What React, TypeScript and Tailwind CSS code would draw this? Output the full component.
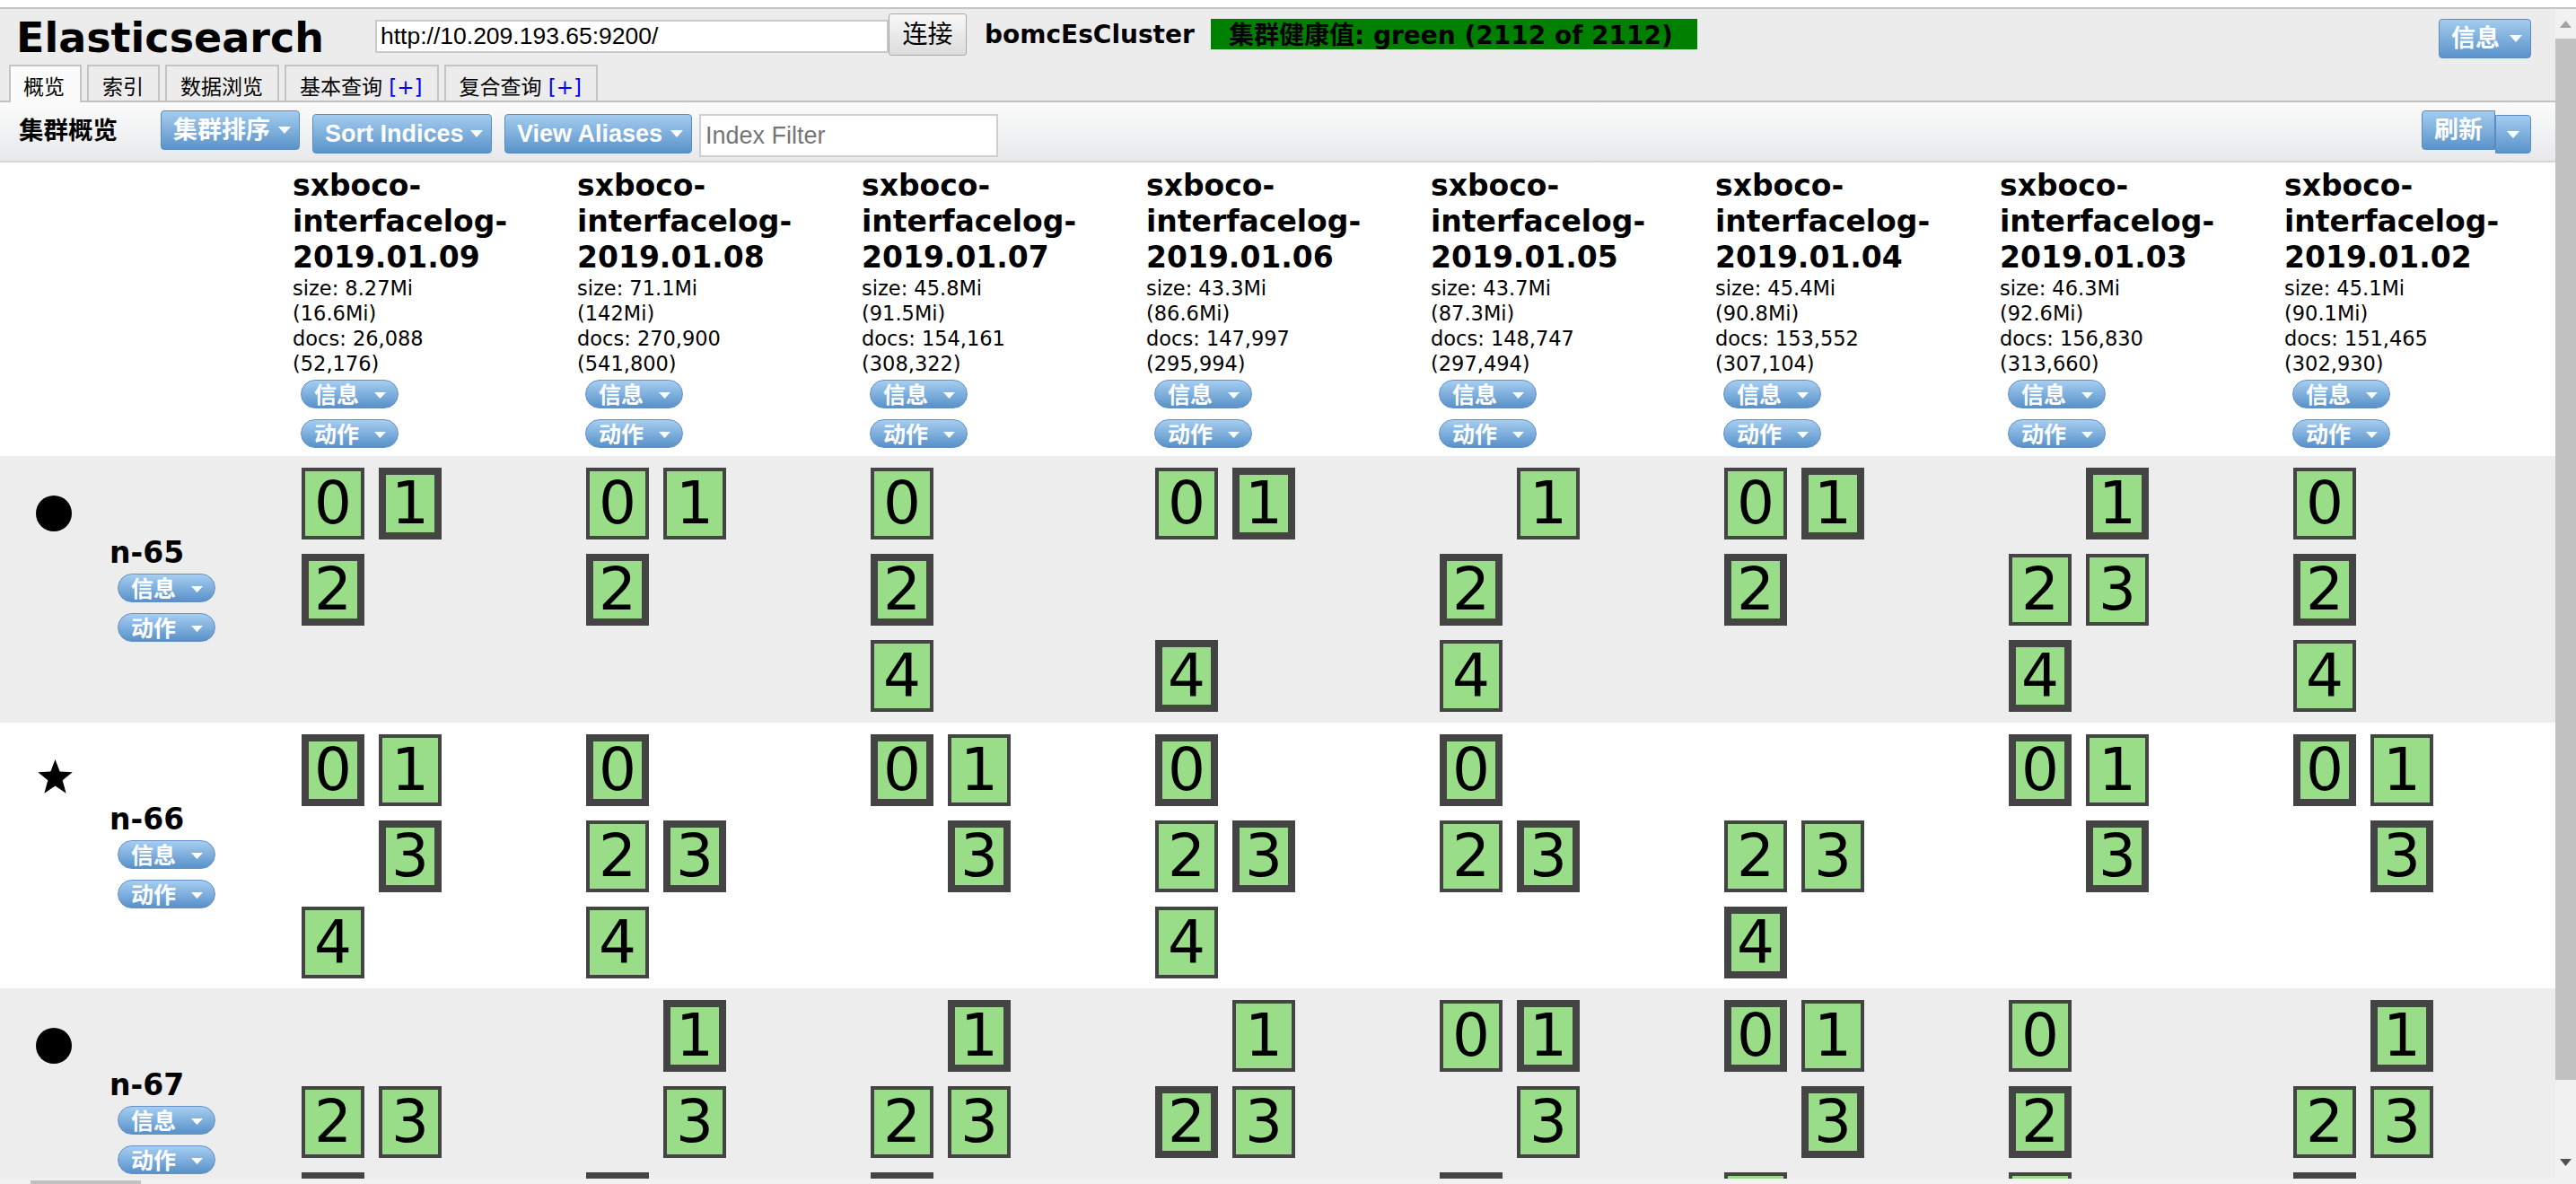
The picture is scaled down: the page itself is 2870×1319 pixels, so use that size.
import React from "react";

const SANS = "font-['DejaVu_Sans','Noto_Sans_CJK_SC',sans-serif]";
const ARIAL = "font-['Liberation_Sans','Noto_Sans_CJK_SC',sans-serif]";

type Slot = "P" | "R" | "";

const indices = [
  { date: "2019.01.09", size: "8.27Mi", total: "16.6Mi", docs: "26,088", all: "52,176" },
  { date: "2019.01.08", size: "71.1Mi", total: "142Mi", docs: "270,900", all: "541,800" },
  { date: "2019.01.07", size: "45.8Mi", total: "91.5Mi", docs: "154,161", all: "308,322" },
  { date: "2019.01.06", size: "43.3Mi", total: "86.6Mi", docs: "147,997", all: "295,994" },
  { date: "2019.01.05", size: "43.7Mi", total: "87.3Mi", docs: "148,747", all: "297,494" },
  { date: "2019.01.04", size: "45.4Mi", total: "90.8Mi", docs: "153,552", all: "307,104" },
  { date: "2019.01.03", size: "46.3Mi", total: "92.6Mi", docs: "156,830", all: "313,660" },
  { date: "2019.01.02", size: "45.1Mi", total: "90.1Mi", docs: "151,465", all: "302,930" },
];

// slot i holds shard i: P = primary (thick border), R = replica
const nodes: { name: string; master: boolean; row: string; shards: Slot[][] }[] = [
  {
    name: "n-65",
    master: false,
    row: "h-[297px] bg-[#ededed]",
    shards: [
      ["R", "P", "P", "", ""],
      ["R", "R", "P", "", ""],
      ["R", "", "P", "", "R"],
      ["R", "P", "", "", "P"],
      ["", "R", "P", "", "R"],
      ["R", "P", "P", "", ""],
      ["", "P", "R", "R", "P"],
      ["R", "", "P", "", "R"],
    ],
  },
  {
    name: "n-66",
    master: true,
    row: "h-[296px] bg-white",
    shards: [
      ["P", "R", "", "P", "R"],
      ["P", "", "R", "P", "R"],
      ["P", "R", "", "P", ""],
      ["P", "", "R", "P", "R"],
      ["P", "", "R", "P", ""],
      ["", "", "R", "R", "P"],
      ["P", "R", "", "P", ""],
      ["P", "R", "", "P", ""],
    ],
  },
  {
    name: "n-67",
    master: false,
    row: "h-[296px] bg-[#ededed]",
    shards: [
      ["", "", "R", "R", "P"],
      ["", "P", "", "R", "P"],
      ["", "P", "R", "R", "P"],
      ["", "R", "P", "R", ""],
      ["R", "P", "", "R", "P"],
      ["P", "R", "", "P", "R"],
      ["R", "", "P", "", "R"],
      ["", "P", "R", "R", "P"],
    ],
  },
];

function Caret({ w = 14, h = 8, color = "#fff", className = "" }: { w?: number; h?: number; color?: string; className?: string }) {
  return (
    <svg className={className} width={w} height={h} viewBox={`0 0 ${w} ${h}`}>
      <path d={`M0 0H${w}L${w / 2} ${h}Z`} fill={color} />
    </svg>
  );
}

function BlueButton({ label, className = "" }: { label: string; className?: string }) {
  return (
    <div
      className={`flex h-[44px] shrink-0 items-center justify-between rounded-[4px] border border-[#5b8bc5] bg-linear-to-b from-[#a4ccef] to-[#5a93c9] pl-[13px] pr-[9px] text-[27px] font-bold leading-none text-white ${ARIAL} ${className}`}
    >
      <span>{label}</span>
      <Caret />
    </div>
  );
}

function Pill({ label }: { label: string }) {
  return (
    <div className="flex h-[32px] w-[109px] items-center overflow-hidden rounded-full border border-[#6690c7] bg-linear-to-b from-[#a6cef1] to-[#5891c9]">
      <span className={`pl-[14px] pt-[3px] text-[25px] font-bold leading-none text-white ${ARIAL}`}>{label}</span>
      <Caret w={13} h={7} className="ml-auto mr-[13px] mt-[3px]" />
    </div>
  );
}

function Shard({ n, kind }: { n: number; kind: Slot }) {
  if (!kind) return <div className="h-[80px] w-[70px]" />;
  return (
    <div
      className={
        kind === "P"
          ? "flex h-[80px] w-[70px] items-center justify-center overflow-hidden border-[8px] border-[#444444] bg-[#99dd88]"
          : "flex h-[80px] w-[70px] items-center justify-center overflow-hidden border-[4px] border-[#444444] bg-[#99dd88]"
      }
    >
      <span className="text-[66px] leading-none text-black">{n}</span>
    </div>
  );
}

function Tab({ label, plus, active }: { label: string; plus?: boolean; active?: boolean }) {
  return (
    <div
      className={
        active
          ? "relative -mb-[2px] h-[42px] border-2 border-b-0 border-[#c4c4c4] bg-[#fbfbfb] pl-[14px] pr-[17px] pt-[12px] text-[23px] leading-none"
          : "h-[40px] border-2 border-b-0 border-[#c4c4c4] bg-[#ececec] pl-[15px] pr-[16px] pt-[12px] text-[23px] leading-none"
      }
    >
      {label}
      {plus && <span className="text-[#0000ff]"> [+]</span>}
    </div>
  );
}

function Star() {
  return (
    <svg width="43" height="41" viewBox="0 0 24 23">
      <path d="M12 0.5L14.9 8.2L22.8 8.5L16.6 13.6L18.8 21.8L12 17.1L5.2 21.8L7.4 13.6L1.2 8.5L9.1 8.2Z" fill="#000" />
    </svg>
  );
}

export default function App() {
  return (
    <div className={`flex h-[1319px] w-[2870px] flex-col overflow-hidden bg-white text-black ${SANS}`}>
      <div className="h-[10px] shrink-0 border-b-2 border-[#c4c4c4] bg-white" />

      <div className="flex min-h-0 flex-1">
        <div className="flex min-w-0 flex-1 flex-col overflow-hidden">
          {/* header */}
          <div className="shrink-0 border-b-2 border-[#c2c2c2] bg-[#ececec]">
            <div className="flex h-[62px] items-start">
              <div className="w-[418px] shrink-0 pl-[18px] pt-[9px] text-[46px] font-bold leading-none">Elasticsearch</div>
              <input
                readOnly
                value="http://10.209.193.65:9200/"
                className={`mt-[12px] h-[37px] w-[572px] shrink-0 border-2 border-[#c9c9c9] bg-white px-[4px] text-[26.5px] text-black outline-none ${ARIAL}`}
              />
              <div className="mt-[5px] flex h-[47px] w-[87px] shrink-0 items-center justify-center rounded-[3px] border border-[#a9a9a9] bg-linear-to-b from-[#f8f8f8] to-[#dcdcdc] text-[28px] leading-none">
                连接
              </div>
              <div className="ml-[20px] mt-[15px] w-[252px] shrink-0 text-[28px] font-bold leading-none">bomcEsCluster</div>
              <div className="mt-[11px] flex h-[34px] w-[542px] shrink-0 items-center bg-[#008000] pl-[20px] pt-[4px] text-[28px] font-bold leading-none text-black">
                集群健康值: green (2112 of 2112)
              </div>
              <div className="flex-1" />
              <BlueButton label="信息" className="mr-[27px] mt-[11px] w-[103px]" />
            </div>
            <div className="flex h-[40px] items-end gap-[6px] pl-[10px]">
              <Tab label="概览" active />
              <Tab label="索引" />
              <Tab label="数据浏览" />
              <Tab label="基本查询" plus />
              <Tab label="复合查询" plus />
            </div>
          </div>

          {/* toolbar */}
          <div className="flex h-[67px] shrink-0 items-start border-b-2 border-[#d3d5d8] bg-linear-to-b from-[#fbfbfb] to-[#e7e9eb]">
            <div className="w-[179px] shrink-0 pl-[21px] pt-[18px] text-[27.5px] font-bold leading-none">集群概览</div>
            <BlueButton label="集群排序" className="mt-[9px] w-[155px]" />
            <BlueButton label="Sort Indices" className="ml-[14px] mt-[13px] w-[200px]" />
            <BlueButton label="View Aliases" className="ml-[14px] mt-[13px] w-[209px]" />
            <input
              placeholder="Index Filter"
              className={`ml-[8px] mt-[13px] h-[48px] w-[333px] shrink-0 border-2 border-[#cfcfcf] bg-white px-[5px] text-[27px] outline-none placeholder:text-[#767676] ${ARIAL}`}
            />
            <div className="flex-1" />
            <div className="mr-[27px] flex items-start">
              <div
                className={`mt-[9px] flex h-[44px] w-[82px] items-center rounded-l-[4px] border border-[#5b8bc5] bg-linear-to-b from-[#a4ccef] to-[#5a93c9] pl-[13px] text-[27px] font-bold leading-none text-white ${ARIAL}`}
              >
                刷新
              </div>
              <div className="mt-[14px] flex h-[43px] w-[40px] items-center justify-center rounded-r-[4px] border border-[#5b8bc5] bg-linear-to-b from-[#a4ccef] to-[#5a93c9]">
                <Caret />
              </div>
            </div>
          </div>

          {/* index headers */}
          <div className="flex h-[327px] shrink-0">
            <div className="w-[326px] shrink-0" />
            {indices.map((ix) => (
              <div key={ix.date} className="w-[317px] shrink-0 pt-[6px]">
                <div className="text-[33px] font-bold leading-[40px]">
                  <div>sxboco-</div>
                  <div>interfacelog-</div>
                  <div>{ix.date}</div>
                </div>
                <div className="text-[22.5px] leading-[28px]">
                  <div>size: {ix.size}</div>
                  <div>({ix.total})</div>
                  <div>docs: {ix.docs}</div>
                  <div>({ix.all})</div>
                </div>
                <div className="ml-[9px] mt-[4px] flex flex-col gap-[12px]">
                  <Pill label="信息" />
                  <Pill label="动作" />
                </div>
              </div>
            ))}
          </div>

          {/* node rows */}
          {nodes.map((node) => (
            <div key={node.name} className={`flex shrink-0 ${node.row}`}>
              <div className="flex w-[326px] shrink-0 items-start pl-[40px]">
                {node.master ? (
                  <div className="mt-[40px]">
                    <Star />
                  </div>
                ) : (
                  <div className="mt-[44px] h-[40px] w-[40px] rounded-full bg-black" />
                )}
                <div className={node.master ? "ml-[39px] mt-[88px]" : "ml-[42px] mt-[88px]"}>
                  <div className="text-[33px] font-bold leading-[40px]">{node.name}</div>
                  <div className="ml-[9px] mt-[3px] flex flex-col gap-[12px]">
                    <Pill label="信息" />
                    <Pill label="动作" />
                  </div>
                </div>
              </div>
              {node.shards.map((cell, ci) => (
                <div key={ci} className="w-[317px] shrink-0 pl-[10px] pt-[13px]">
                  <div className="grid grid-cols-[70px_70px] gap-[16px]">
                    {cell.map((kind, n) => (
                      <Shard key={n} n={n} kind={kind} />
                    ))}
                  </div>
                </div>
              ))}
            </div>
          ))}
        </div>

        {/* vertical scrollbar */}
        <div className="flex w-[23px] shrink-0 flex-col bg-[#f1f1f1]">
          <div className="flex h-[33px] shrink-0 items-center justify-center">
            <svg width="13" height="8" viewBox="0 0 13 8">
              <path d="M0 8H13L6.5 0Z" fill="#a3a3a3" />
            </svg>
          </div>
          <div className="h-[1160px] shrink-0 bg-[#c1c1c1]" />
          <div className="flex flex-1 items-end justify-center pb-[14px]">
            <Caret w={13} h={8} color="#505050" />
          </div>
        </div>
      </div>

      {/* horizontal scrollbar */}
      <div className="h-[6px] shrink-0 bg-[#f1f1f1] pt-[2px]">
        <div className="ml-[34px] h-[4px] w-[123px] bg-[#c1c1c1]" />
      </div>
    </div>
  );
}
